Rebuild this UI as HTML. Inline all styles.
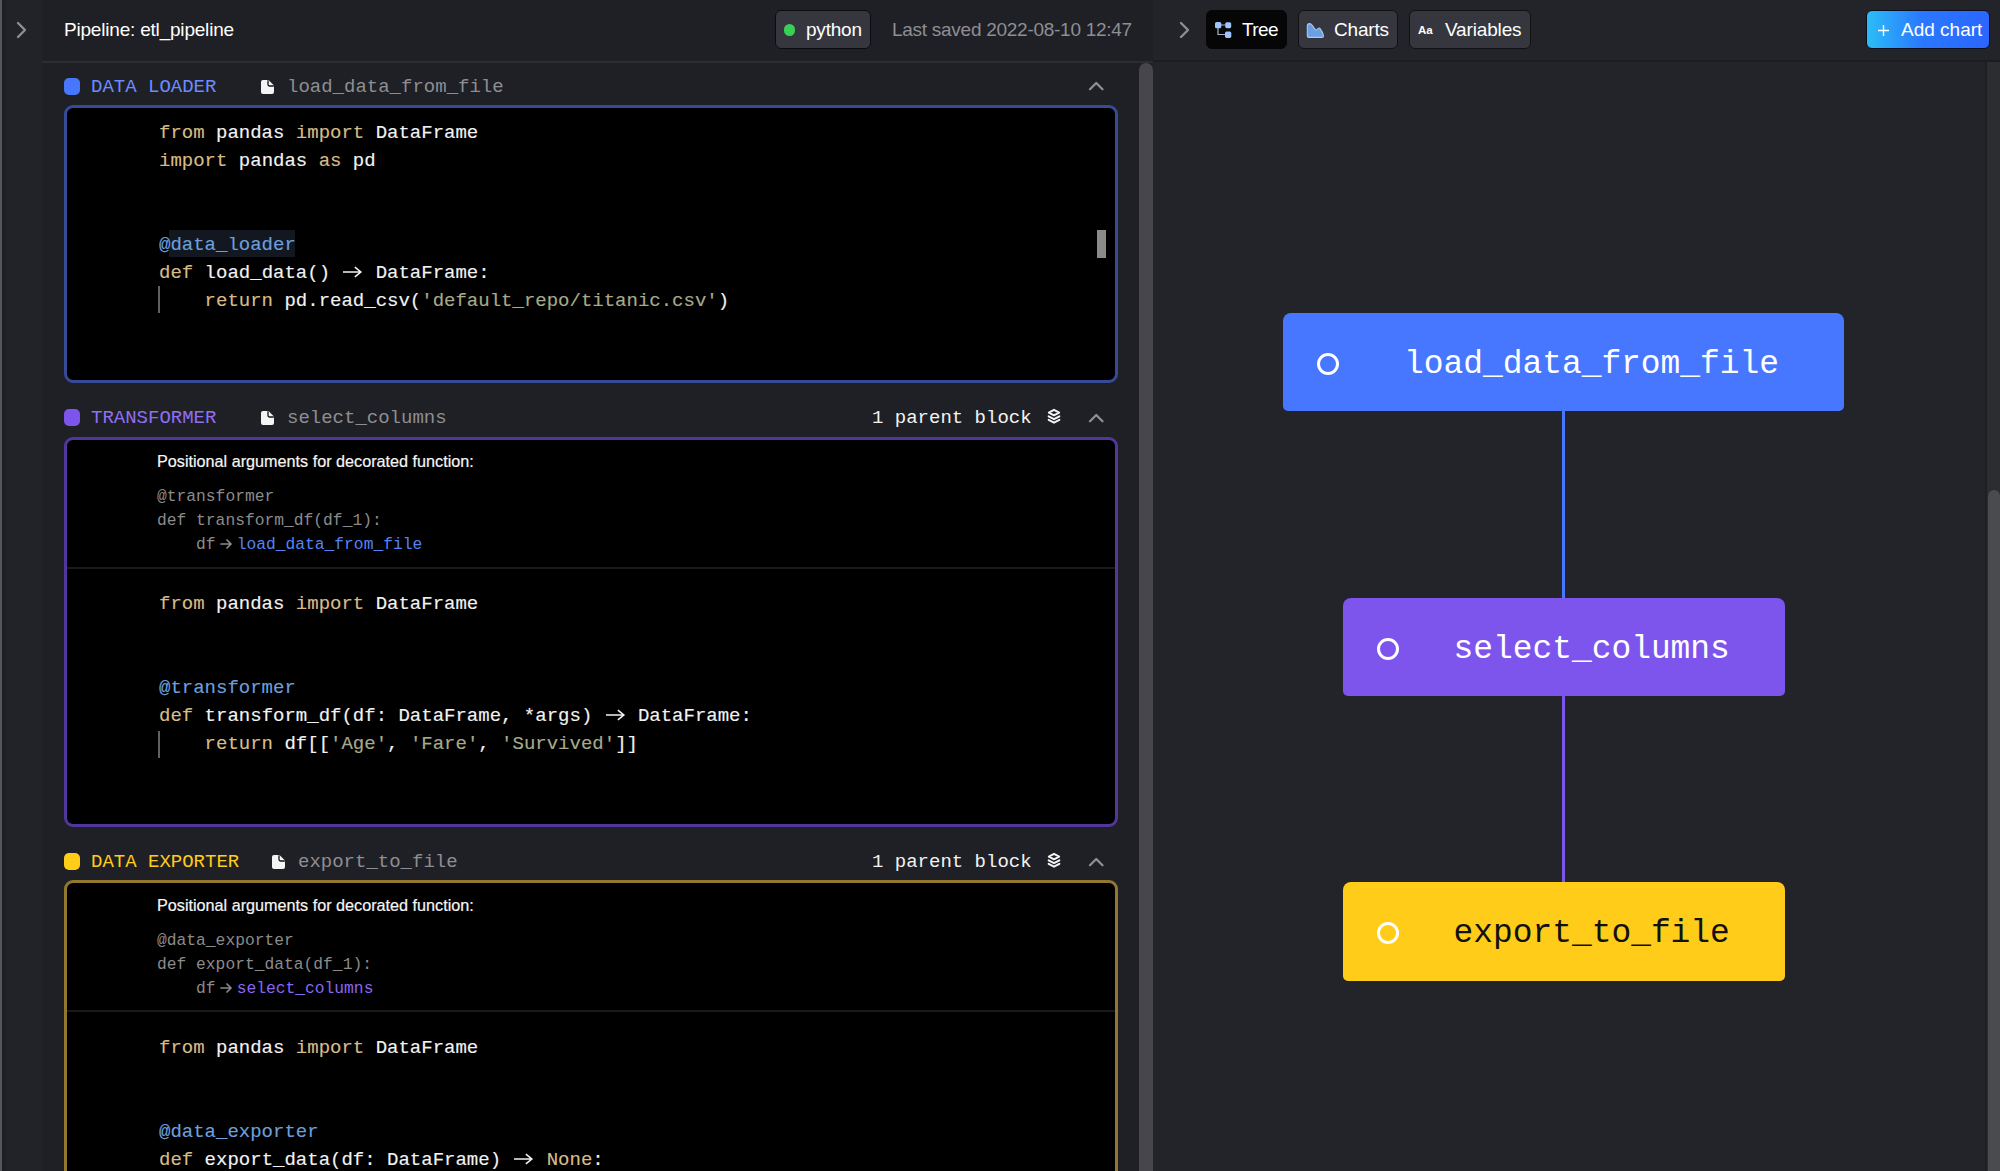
<!DOCTYPE html>
<html><head><meta charset="utf-8">
<style>
*{margin:0;padding:0;box-sizing:border-box}
html,body{width:2000px;height:1171px;overflow:hidden;background:#222328;font-family:"Liberation Sans",sans-serif}
.a{position:absolute}
.mono{font-family:"Liberation Mono",monospace}
.code{-webkit-text-stroke:0.15px currentColor}
.pos{-webkit-text-stroke:0.2px currentColor}
.code{font-family:"Liberation Mono",monospace;font-size:19px;line-height:28px;white-space:pre;color:#f2f2f2;position:absolute;left:159px}
.k{color:#d8bc86}
.s{color:#a6ab88}
.d{color:#6c9fdc}
.sm{font-family:"Liberation Mono",monospace;font-size:16.3px;line-height:24px;white-space:pre;color:#8b8b8b;position:absolute;left:157px}
.pos{font-size:16.2px;color:#f5f5f5;position:absolute;left:157px;line-height:20px}
.frame{position:absolute;left:64px;width:1054px;background:#000;border:3px solid #3a56ac;border-radius:9px}
.hdr{position:absolute;left:64px;width:1054px;height:28px}
.sq{position:absolute;left:0;top:5px;width:16px;height:17px;border-radius:5px}
.btype{position:absolute;left:27px;top:0;font-family:"Liberation Mono",monospace;font-size:19px;line-height:28px;white-space:pre}
.fname{position:absolute;font-family:"Liberation Mono",monospace;font-size:19px;line-height:28px;color:#8e8e92;white-space:pre}
.par{position:absolute;left:808px;top:0;font-family:"Liberation Mono",monospace;font-size:19px;line-height:28px;color:#f2f2f2;white-space:pre}
.arr{display:inline-block;width:22.8px;height:14px;vertical-align:-1px}
.btn{position:absolute;top:10px;height:39px;border-radius:6px;border:1px solid #111;background:#36373e;color:#fff;font-size:19px}
.node{position:absolute;border-radius:8px 8px 5px 5px}
.node .c{position:absolute;width:22px;height:22px;border:3px solid #fff;border-radius:50%}
.node .t{position:absolute;font-family:"Liberation Mono",monospace;font-size:32.9px;line-height:40px;white-space:pre;color:#fff}
</style></head>
<body>
<!-- left edge strip -->
<div class="a" style="left:42px;top:0;width:1111px;height:1171px;background:#1f2025"></div>
<div class="a" style="left:0;top:0;width:2px;height:1171px;background:#55565b"></div>
<div class="a" style="left:2px;top:0;width:4px;height:1171px;background:#1e1f24"></div>
<!-- left chevron -->
<svg class="a" style="left:15px;top:20px" width="14" height="20" viewBox="0 0 14 20"><path d="M3 3 L10 10 L3 17" stroke="#8d8d92" stroke-width="2.4" fill="none" stroke-linecap="round" stroke-linejoin="round"/></svg>
<!-- header -->
<div class="a" style="left:64px;top:18px;font-size:19px;line-height:24px;color:#fff;letter-spacing:-0.2px">Pipeline: etl_pipeline</div>
<div class="a" style="left:42px;top:61px;width:1111px;height:2px;background:#2c2d33"></div>
<div class="btn" style="left:775px;width:96px;border-color:#0c0c0e">
  <div class="a" style="left:7.5px;top:13px;width:11.5px;height:11.5px;border-radius:50%;background:#38d156"></div>
  <div class="a" style="left:30px;top:7px;line-height:24px;letter-spacing:-0.2px">python</div>
</div>
<div class="a" style="left:892px;top:18px;font-size:19px;line-height:24px;color:#8e8e94;letter-spacing:-0.27px">Last saved 2022-08-10 12:47</div>

<!-- left scrollbar -->
<div class="a" style="left:1139px;top:63px;width:14px;height:1108px;background:#46464b;border-radius:7px 7px 0 0"></div>

<!-- right panel -->
<div class="a" style="left:1153px;top:0;width:847px;height:1171px;background:#232429"></div>
<div class="a" style="left:1153px;top:60px;width:847px;height:2px;background:#1c1d21"></div>
<svg class="a" style="left:1177.5px;top:20px" width="14" height="20" viewBox="0 0 14 20"><path d="M3 3 L10 10 L3 17" stroke="#8d8d92" stroke-width="2.4" fill="none" stroke-linecap="round" stroke-linejoin="round"/></svg>
<div class="btn" style="left:1206px;width:81px;background:#060606;border-color:#060606">
  <svg class="a" style="left:8px;top:11px" width="18" height="17" viewBox="0 0 18 17"><path d="M6 3 H10.5 M3 6 V12.5 H10.5" stroke="#a9b4c8" stroke-width="1.2" fill="none"/><rect x="0" y="0" width="6.3" height="6.3" rx="1.6" fill="#9ec5ff"/><rect x="10.2" y="0.2" width="6" height="6" rx="1.6" fill="#9ec5ff"/><rect x="10" y="9.6" width="6.3" height="6.3" rx="1.6" fill="#9ec5ff"/></svg>
  <div class="a" style="left:35px;top:7px;line-height:24px;letter-spacing:-0.6px">Tree</div>
</div>
<div class="btn" style="left:1298px;width:100px">
  <svg class="a" style="left:7px;top:12px" width="19" height="16" viewBox="0 0 19 16"><path d="M1.3 3 Q1.3 0.6 3.5 0.6 Q5 0.6 6 2 L9.3 6.6 Q10 7.4 10.8 6.7 L12.2 5.4 Q13.2 4.6 14.1 5.6 Q16.5 8.7 17.4 12.3 Q17.8 14.4 15.8 14.4 H3.3 Q1.3 14.4 1.3 12.4 Z" fill="#6b9fe3" stroke="#a6c9f3" stroke-width="1.1"/></svg>
  <div class="a" style="left:35px;top:7px;line-height:24px;letter-spacing:-0.2px">Charts</div>
</div>
<div class="btn" style="left:1409px;width:122px">
  <div class="a" style="left:8px;top:12px;font-size:11.5px;font-weight:bold;line-height:14px">Aa</div>
  <div class="a" style="left:35px;top:7px;line-height:24px;letter-spacing:-0.15px">Variables</div>
</div>
<div class="btn" style="left:1866px;width:124px;border:1px solid #0a0f20;background:linear-gradient(90deg,#2bbdf6,#2a78ff 45%,#2a66ff)">
  <svg class="a" style="left:10.5px;top:14px" width="11" height="11" viewBox="0 0 11 11"><path d="M5.5 0 V11 M0 5.5 H11" stroke="#fff" stroke-width="1.4"/></svg>
  <div class="a" style="left:34px;top:7px;line-height:24px">Add chart</div>
</div>
<!-- right scrollbar -->
<div class="a" style="left:1985px;top:62px;width:2px;height:1109px;background:#1e1f23"></div>
<div class="a" style="left:1987px;top:62px;width:13px;height:1109px;background:#2c2d31"></div>
<div class="a" style="left:1988px;top:490px;width:12px;height:681px;background:#4a4b4f;border-radius:6px 6px 0 0"></div>

<!-- graph -->
<div class="a" style="left:1562px;top:408px;width:3px;height:192px;background:#4877ff"></div>
<div class="a" style="left:1562px;top:693px;width:3px;height:192px;background:#7d55ec"></div>
<div class="node" style="left:1283px;top:313px;width:561px;height:98px;background:#4877ff">
  <div class="c" style="left:34px;top:40px"></div>
  <div class="t" style="left:121px;top:32px">load_data_from_file</div>
</div>
<div class="node" style="left:1342.5px;top:597.5px;width:442px;height:98.5px;background:#7d55ec">
  <div class="c" style="left:34px;top:40px"></div>
  <div class="t" style="left:111px;top:32px">select_columns</div>
</div>
<div class="node" style="left:1342.5px;top:882px;width:442px;height:99px;background:#ffcc19">
  <div class="c" style="left:34px;top:40px"></div>
  <div class="t" style="left:111px;top:32px;color:#111">export_to_file</div>
</div>

<!-- ============ BLOCK 1 ============ -->
<div class="hdr" style="top:72.5px">
  <div class="sq" style="background:#4877ff"></div>
  <div class="btype" style="color:#6b8cff">DATA LOADER</div>
  <svg class="a" style="left:195.5px;top:6px" width="15" height="16" viewBox="0 0 15 16"><path d="M1 3 Q1 1 3 1 H8.5 L14 6.5 V13 Q14 15 12 15 H3 Q1 15 1 13 Z" fill="#f4f4f4"/><path d="M8 1.3 V5.6 Q8 7 9.4 7 H13.8" stroke="#111" stroke-width="1.3" fill="none"/></svg>
  <div class="fname" style="left:223px">load_data_from_file</div>
  <svg class="a" style="left:1023.5px;top:6.5px" width="17" height="13" viewBox="0 0 17 13"><path d="M2 10.2 L8.25 4 L14.5 10.2" stroke="#8f8f95" stroke-width="2.3" fill="none" stroke-linecap="round" stroke-linejoin="round"/></svg>
</div>
<div class="frame" style="top:105px;height:278px;border-color:#364a98">
  <div class="a" style="left:102px;top:121.5px;width:126px;height:27px;background:#131820"></div>
  <div class="a" style="left:91px;top:178px;width:2px;height:27px;background:#616165"></div>
  <div class="a" style="left:1030px;top:122px;width:9px;height:28px;background:#8a8a8a"></div>
</div>
<div class="code" style="top:119px"><span class="k">from</span> pandas <span class="k">import</span> DataFrame
<span class="k">import</span> pandas <span class="k">as</span> pd


<span class="d">@data_loader</span>
<span class="k">def</span> load_data() <svg class="arr" viewBox="0 0 23 14"><path d="M2 7 H20 M14 2 L20 7 L14 12" stroke="#f2f2f2" stroke-width="1.6" fill="none"/></svg> DataFrame:
    <span class="k">return</span> pd.read_csv(<span class="s">'default_repo/titanic.csv'</span>)
</div>

<!-- ============ BLOCK 2 ============ -->
<div class="hdr" style="top:404px">
  <div class="sq" style="background:#7d55ec"></div>
  <div class="btype" style="color:#8f6ff2">TRANSFORMER</div>
  <svg class="a" style="left:195.5px;top:6px" width="15" height="16" viewBox="0 0 15 16"><path d="M1 3 Q1 1 3 1 H8.5 L14 6.5 V13 Q14 15 12 15 H3 Q1 15 1 13 Z" fill="#f4f4f4"/><path d="M8 1.3 V5.6 Q8 7 9.4 7 H13.8" stroke="#111" stroke-width="1.3" fill="none"/></svg>
  <div class="fname" style="left:223px">select_columns</div>
  <div class="par">1 parent block</div>
  <svg class="a" style="left:983px;top:4px" width="14" height="16" viewBox="0 0 14 16"><path d="M7 1.8 L12.2 4.6 L7 7.4 L1.8 4.6 Z" stroke="#f4f4f4" stroke-width="1.9" fill="none" stroke-linejoin="round"/><path d="M1.6 8.3 L7 11.2 L12.4 8.3 M1.6 11.8 L7 14.7 L12.4 11.8" stroke="#f4f4f4" stroke-width="1.9" fill="none" stroke-linecap="round" stroke-linejoin="round"/></svg>
  <svg class="a" style="left:1023.5px;top:6.5px" width="17" height="13" viewBox="0 0 17 13"><path d="M2 10.2 L8.25 4 L14.5 10.2" stroke="#8f8f95" stroke-width="2.3" fill="none" stroke-linecap="round" stroke-linejoin="round"/></svg>
</div>
<div class="frame" style="top:437px;height:390px;border-color:#51369c">
  <div class="a" style="left:0;top:126.5px;width:1048px;height:2px;background:#1a1a1c"></div>
  <div class="a" style="left:91px;top:290.5px;width:2px;height:27px;background:#616165"></div>
</div>
<div class="pos" style="top:451px">Positional arguments for decorated function:</div>
<div class="sm" style="top:485px">@transformer
def transform_df(df_1):
    df<svg style="display:inline-block;width:21px;height:12px;vertical-align:-1px" viewBox="0 0 21 12"><path d="M5 6 H15 M11 2 L15 6 L11 10" stroke="#8b8b8b" stroke-width="1.7" fill="none" stroke-linecap="round" stroke-linejoin="round"/></svg><span style="color:#5583f5">load_data_from_file</span></div>
<div class="code" style="top:590px"><span class="k">from</span> pandas <span class="k">import</span> DataFrame


<span class="d">@transformer</span>
<span class="k">def</span> transform_df(df: DataFrame, *args) <svg class="arr" viewBox="0 0 23 14"><path d="M2 7 H20 M14 2 L20 7 L14 12" stroke="#f2f2f2" stroke-width="1.6" fill="none"/></svg> DataFrame:
    <span class="k">return</span> df[[<span class="s">'Age'</span>, <span class="s">'Fare'</span>, <span class="s">'Survived'</span>]]
</div>

<!-- ============ BLOCK 3 ============ -->
<div class="hdr" style="top:848px">
  <div class="sq" style="background:#ffcc19"></div>
  <div class="btype" style="color:#ffcc19">DATA EXPORTER</div>
  <svg class="a" style="left:206.5px;top:6px" width="15" height="16" viewBox="0 0 15 16"><path d="M1 3 Q1 1 3 1 H8.5 L14 6.5 V13 Q14 15 12 15 H3 Q1 15 1 13 Z" fill="#f4f4f4"/><path d="M8 1.3 V5.6 Q8 7 9.4 7 H13.8" stroke="#111" stroke-width="1.3" fill="none"/></svg>
  <div class="fname" style="left:234px">export_to_file</div>
  <div class="par">1 parent block</div>
  <svg class="a" style="left:983px;top:4px" width="14" height="16" viewBox="0 0 14 16"><path d="M7 1.8 L12.2 4.6 L7 7.4 L1.8 4.6 Z" stroke="#f4f4f4" stroke-width="1.9" fill="none" stroke-linejoin="round"/><path d="M1.6 8.3 L7 11.2 L12.4 8.3 M1.6 11.8 L7 14.7 L12.4 11.8" stroke="#f4f4f4" stroke-width="1.9" fill="none" stroke-linecap="round" stroke-linejoin="round"/></svg>
  <svg class="a" style="left:1023.5px;top:6.5px" width="17" height="13" viewBox="0 0 17 13"><path d="M2 10.2 L8.25 4 L14.5 10.2" stroke="#8f8f95" stroke-width="2.3" fill="none" stroke-linecap="round" stroke-linejoin="round"/></svg>
</div>
<div class="frame" style="top:880px;height:320px;border-color:#94772e">
  <div class="a" style="left:0;top:126.5px;width:1048px;height:2px;background:#1a1a1c"></div>
</div>
<div class="pos" style="top:895px">Positional arguments for decorated function:</div>
<div class="sm" style="top:929px">@data_exporter
def export_data(df_1):
    df<svg style="display:inline-block;width:21px;height:12px;vertical-align:-1px" viewBox="0 0 21 12"><path d="M5 6 H15 M11 2 L15 6 L11 10" stroke="#8b8b8b" stroke-width="1.7" fill="none" stroke-linecap="round" stroke-linejoin="round"/></svg><span style="color:#8a66f5">select_columns</span></div>
<div class="code" style="top:1034px"><span class="k">from</span> pandas <span class="k">import</span> DataFrame


<span class="d">@data_exporter</span>
<span class="k">def</span> export_data(df: DataFrame) <svg class="arr" viewBox="0 0 23 14"><path d="M2 7 H20 M14 2 L20 7 L14 12" stroke="#f2f2f2" stroke-width="1.6" fill="none"/></svg> <span class="k">None</span>:
</div>
</body></html>
